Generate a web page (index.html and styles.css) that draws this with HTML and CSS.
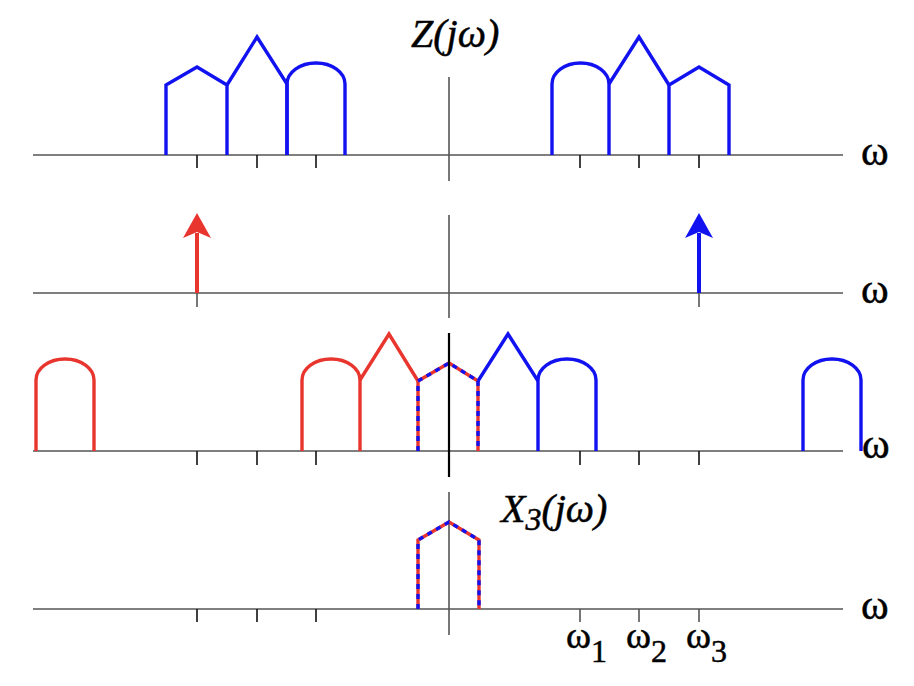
FILE: index.html
```html
<!DOCTYPE html>
<html lang="en">
<head>
<meta charset="utf-8">
<title>Z(jω) spectrum demodulation</title>
<link rel="stylesheet" href="styles.css">
</head>
<body>
<div class="figure">
<svg class="plot" width="914" height="686" viewBox="0 0 914 686" xmlns="http://www.w3.org/2000/svg">
  <!-- Panel 1 : Z(jw) -->
  <g class="panel">
    <line class="axis" x1="33" y1="155" x2="843" y2="155"/>
    <line class="axis" x1="449" y1="77" x2="449" y2="181"/>
    <g class="tick">
      <line x1="197" y1="155" x2="197" y2="168"/>
      <line x1="257" y1="155" x2="257" y2="168"/>
      <line x1="316" y1="155" x2="316" y2="168"/>
      <line x1="580" y1="155" x2="580" y2="168"/>
      <line x1="639" y1="155" x2="639" y2="168"/>
      <line x1="699" y1="155" x2="699" y2="168"/>
    </g>
    <path class="blue" d="M166,155 V85 L197,67 L227,85 V155"/>
    <path class="blue" d="M227,85 L257,37 L287,84 V155"/>
    <path class="blue" d="M287,155 V84 A29,21 0 0 1 345,84 V155"/>
    <path class="blue" d="M552,155 V84 A28.5,21 0 0 1 609,84 V155"/>
    <path class="blue" d="M609,84 L639,37 L669,85"/>
    <path class="blue" d="M669,155 V85 L699,67 L729,85 V155"/>
    <text class="title" x="411" y="47">Z(jω)</text>
    <text class="wlabel" x="861" y="165">ω</text>
  </g>

  <!-- Panel 2 : carriers -->
  <g class="panel">
    <line class="axis" x1="33" y1="293" x2="843" y2="293"/>
    <line class="axis" x1="449" y1="215" x2="449" y2="318"/>
    <line class="axis" x1="197" y1="293" x2="197" y2="307"/>
    <line class="axis" x1="699" y1="293" x2="699" y2="307"/>
    <line class="shaft red-stroke" x1="197" y1="293" x2="197" y2="233"/>
    <polygon class="red-fill" points="197,213 211,238 197,232 183,238"/>
    <line class="shaft blue-stroke" x1="699" y1="293" x2="699" y2="233"/>
    <polygon class="blue-fill" points="699,213 713,238 699,232 685,238"/>
    <text class="wlabel" x="861" y="303">ω</text>
  </g>

  <!-- Panel 3 : shifted copies -->
  <g class="panel">
    <line class="axis" x1="33" y1="451" x2="843" y2="451"/>
    <g class="tick">
      <line x1="197" y1="451" x2="197" y2="465"/>
      <line x1="257" y1="451" x2="257" y2="465"/>
      <line x1="316" y1="451" x2="316" y2="465"/>
      <line x1="580" y1="451" x2="580" y2="465"/>
      <line x1="639" y1="451" x2="639" y2="465"/>
      <line x1="699" y1="451" x2="699" y2="465"/>
    </g>
    <path class="red" d="M36,451 V380 A29,21 0 0 1 94,380 V451"/>
    <path class="red" d="M302,451 V380 A29,21 0 0 1 360,380 V451"/>
    <path class="red" d="M360,380 L389,334 L418,381"/>
    <path class="red" d="M418,451 V381 L449,363 L478,381 V451"/>
    <path class="blue dash" d="M418,451 V381 L449,363 L478,381 V451"/>
    <path class="blue" d="M478,381 L508,334 L538,381"/>
    <path class="blue" d="M538,451 V380 A29,21 0 0 1 596,380 V451"/>
    <path class="blue" d="M803,451 V380 A29,21 0 0 1 861,380 V451"/>
    <line class="axis-dark" x1="449" y1="333" x2="449" y2="477"/>
    <text class="wlabel" x="862" y="458">ω</text>
  </g>

  <!-- Panel 4 : X3(jw) -->
  <g class="panel">
    <line class="axis" x1="33" y1="609" x2="843" y2="609"/>
    <line class="axis" x1="449" y1="492" x2="449" y2="635"/>
    <g class="tick">
      <line x1="197" y1="609" x2="197" y2="622"/>
      <line x1="257" y1="609" x2="257" y2="622"/>
      <line x1="316" y1="609" x2="316" y2="622"/>
    </g>
    <g class="tick-grey">
      <line x1="580" y1="609" x2="580" y2="622"/>
      <line x1="639" y1="609" x2="639" y2="622"/>
      <line x1="699" y1="609" x2="699" y2="622"/>
    </g>
    <path class="red" d="M418,609 V540 L449,522 L479,540 V609"/>
    <path class="blue dash" d="M418,609 V540 L449,522 L479,540 V609"/>
    <text class="title" x="501" y="522">X<tspan class="sub" dy="8">3</tspan><tspan dy="-8">(jω)</tspan></text>
    <text class="wlabel" x="861" y="619">ω</text>
    <text class="freq" x="566" y="648">ω<tspan class="fsub" dy="14">1</tspan></text>
    <text class="freq" x="626" y="648">ω<tspan class="fsub" dy="14">2</tspan></text>
    <text class="freq" x="686" y="648">ω<tspan class="fsub" dy="14">3</tspan></text>
  </g>
</svg>
</div>
</body>
</html>
```

FILE: styles.css
```css
html, body {
  margin: 0;
  padding: 0;
  background: #ffffff;
}

.figure {
  width: 914px;
  height: 686px;
  overflow: hidden;
}

.plot {
  display: block;
}

.axis {
  stroke: #555555;
  stroke-width: 1.6;
  fill: none;
}

.axis-dark {
  stroke: #000000;
  stroke-width: 2.2;
}

.tick line {
  stroke: #111111;
  stroke-width: 1.6;
}

.tick-grey line {
  stroke: #555555;
  stroke-width: 1.6;
}

.blue {
  fill: none;
  stroke: #1212f0;
  stroke-width: 3.4;
  stroke-linejoin: miter;
}

.red {
  fill: none;
  stroke: #e8352e;
  stroke-width: 3.4;
  stroke-linejoin: miter;
}

.dash {
  stroke-dasharray: 5 5;
}

.shaft {
  stroke-width: 4;
}

.red-stroke {
  stroke: #e8352e;
}

.blue-stroke {
  stroke: #1212f0;
}

.red-fill {
  fill: #e8352e;
}

.blue-fill {
  fill: #1212f0;
}

.title,
.wlabel,
.freq {
  font-family: "Liberation Serif", "Times New Roman", serif;
  fill: #000000;
  stroke: #000000;
  stroke-width: 0.5;
}

.title {
  font-style: italic;
  font-size: 40px;
}

.sub {
  font-size: 32px;
}

.wlabel {
  font-size: 42px;
}

.freq {
  font-size: 38px;
}

.fsub {
  font-size: 32px;
}
```
